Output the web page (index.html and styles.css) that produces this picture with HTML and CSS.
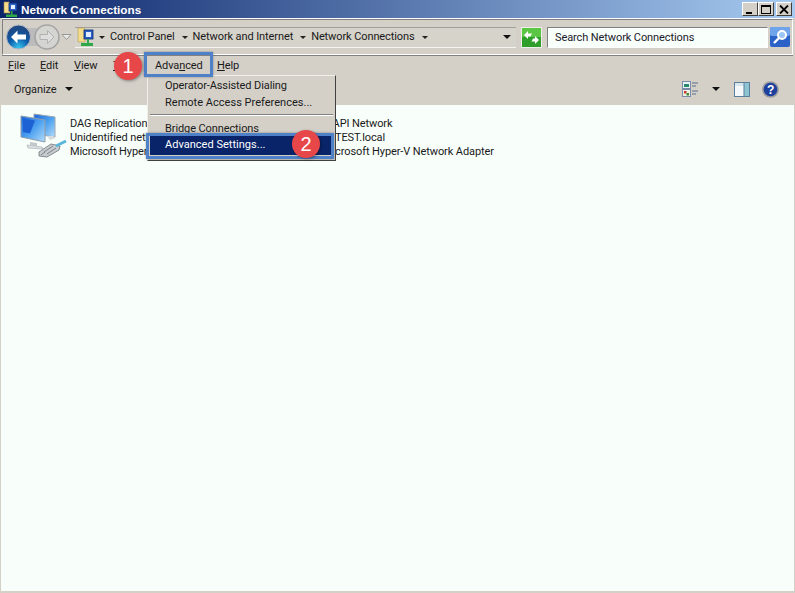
FILE: index.html
```html
<!DOCTYPE html>
<html lang="en">
<head>
<meta charset="utf-8">
<title>Network Connections</title>
<link rel="stylesheet" href="styles.css">
</head>
<body>
<svg class="defs" width="0" height="0">
  <defs>
    <radialGradient id="bk" cx=".5" cy=".95" r=".8"><stop offset="0" stop-color="#35c8f4"/><stop offset=".55" stop-color="#0c5aa8"/><stop offset="1" stop-color="#1f4a86"/></radialGradient>
    <linearGradient id="scr" x1="0" y1="0" x2="1" y2="1"><stop offset="0" stop-color="#1f66d8"/><stop offset=".5" stop-color="#4aa0f0"/><stop offset="1" stop-color="#b4dcfa"/></linearGradient>
    <symbol id="net" viewBox="0 0 50 50">
      <path d="M16 4l21 3v20l-21-3z" fill="url(#scr)" stroke="#9aa6b4"/>
      <path d="M29 26h6l3 2-6 2z" fill="#d8dbde"/>
      <path d="M3 6l24 4v22L3 27z" fill="url(#scr)" stroke="#8f9caa"/>
      <path d="M5 8.500l12 2-5 13-7-1.500z" fill="#1c62d4"/>
      <path d="M12 32l7 1v3l-7-1z" fill="#c4c8cc"/>
      <path d="M9 35l15 2 1 2-15-1z" fill="#e0e2e4" stroke="#a0a6ac" stroke-width=".6"/>
      <path d="M21 42l12-8 9 2-1 4-12 7-8-1z" fill="#c8ccd0" stroke="#6c7278" stroke-width=".8"/>
      <path d="M26 42l9-6M29 44l9-6M23 45l4-3" stroke="#5c6268" stroke-width=".7"/>
      <path d="M38 36l10-5" stroke="#5ab6da" stroke-width="3"/>
    </symbol>
  </defs>
</svg>
<div class="window">
  <header class="titlebar">
    <svg class="title-icon" width="16" height="17" viewBox="0 0 16 17"><path d="M1 1h5l1 1v10H1z" fill="#f4dc8a" stroke="#a08a40" stroke-width=".6"/><rect x="6" y="2" width="8" height="8" fill="#2a5fc4" stroke="#0c2a70" stroke-width=".8"/><rect x="8" y="4" width="4" height="4" fill="#e8f0ff"/><rect x="3" y="13.500" width="11" height="2.500" fill="#2fa84a"/><rect x="8" y="10" width="1.500" height="4" fill="#2fa84a"/></svg>
    <span class="title-text">Network Connections</span>
    <div class="caption-buttons">
      <button class="cap"><span class="cap-min"></span></button>
      <button class="cap"><span class="cap-max"></span></button>
      <button class="cap cap-close"><svg width="10" height="9" viewBox="0 0 10 9"><path d="M1 .5l8 8M9 .5l-8 8" stroke="#000" stroke-width="1.800"/></svg></button>
    </div>
  </header>

  <div class="addressbar">
    <div class="nav">
      <svg width="70" height="28" viewBox="0 0 70 28"><rect x="11" y="5" width="36" height="18" fill="#bcbcbc"/><circle cx="13.500" cy="14" r="12" fill="url(#bk)" stroke="#b4b8c4"/><path d="M6 14l6.500-6.500v4H21v5h-8.500v4z" fill="#fff"/><circle cx="42" cy="14" r="12" fill="#d4d4d0" stroke="#a4a4a4" stroke-width="1.600"/><path d="M49 14l-6.500-6.500v4H35v5h7.500v4z" fill="#dedede" stroke="#a8a8a8" stroke-width=".8"/><path d="M57 11.500h9l-4.500 5z" fill="#e8e8e8" stroke="#888" stroke-width=".8"/></svg>
    </div>
    <div class="address-field">
      <svg class="addr-icon" width="17" height="20" viewBox="0 0 17 20"><path d="M1 1h6l1 1v13H1z" fill="#f4dc8a" stroke="#b09a50" stroke-width=".6"/><rect x="7" y="3" width="9" height="9" fill="#2a5fc4" stroke="#0c2a70" stroke-width=".8"/><rect x="9" y="5" width="5" height="5" fill="#dfe9ff"/><rect x="4" y="16" width="12" height="3" fill="#2fa84a"/><rect x="10" y="12" width="2" height="4" fill="#2fa84a"/></svg>
      <span class="crumb-arrow"></span><span class="crumb">Control Panel</span>
      <span class="crumb-arrow"></span><span class="crumb">Network and Internet</span>
      <span class="crumb-arrow"></span><span class="crumb">Network Connections</span>
      <span class="crumb-arrow"></span>
      <span class="address-drop"></span>
    </div>
    <button class="refresh"><svg width="19" height="19" viewBox="0 0 19 19"><rect width="19" height="19" fill="#2f9e2a"/><rect width="19" height="9" fill="#5ac644"/><path d="M2 7l4-4v2.500h4l-1.500 3H6V11zM17 12l-4 4v-2.500H9.500l1.500-3h2V8z" fill="#fff"/></svg></button>
    <div class="search-field">Search Network Connections</div>
    <button class="search-btn"><svg width="20" height="20" viewBox="0 0 20 20"><rect width="20" height="20" rx="2" fill="#2a62c8"/><rect width="20" height="9" rx="2" fill="#6fa4ea"/><circle cx="12" cy="8" r="4" fill="#9cc4f4" stroke="#fff" stroke-width="2"/><path d="M9 11l-5 5" stroke="#fff" stroke-width="2.400"/></svg></button>
  </div>

  <nav class="menubar">
    <span class="menu-item m-file"><u>F</u>ile</span>
    <span class="menu-item m-edit"><u>E</u>dit</span>
    <span class="menu-item m-view"><u>V</u>iew</span>
    <span class="menu-item m-tools"><u>T</u>ools</span>
    <span class="menu-item m-advanced">Adva<u>n</u>ced</span>
    <span class="menu-item"><u>H</u>elp</span>
  </nav>

  <div class="toolbar">
    <span class="organize">Organize</span>
    <span class="tb-arrow"></span>
    <div class="tb-right">
      <svg class="tb-views" width="18" height="17" viewBox="0 0 18 17"><rect x=".5" y=".5" width="8" height="7" fill="#e8f4f4" stroke="#7a8aa8"/><rect x="2" y="3" width="5" height="3" fill="#2a8a70"/><rect x=".5" y="8.500" width="8" height="7" fill="#f0f0e0" stroke="#7a8aa8"/><rect x="2" y="10" width="2.500" height="2.500" fill="#c83a30"/><rect x="4.500" y="12" width="2.500" height="2.500" fill="#3a8a40"/><path d="M10 2h6M10 5h4M10 10h6M10 13h4" stroke="#56708c" stroke-width="1.200"/></svg>
      <span class="tb-arrow tb-arrow-views"></span>
      <svg class="tb-pane" width="16" height="15" viewBox="0 0 16 15"><rect x=".5" y=".5" width="15" height="14" fill="#f4f8fa" stroke="#5c7f9c"/><rect x="1" y="1" width="14" height="3" fill="#d8e6ee"/><rect x="10" y="1" width="5" height="13" fill="#8cc4d4"/><path d="M10 1v13" stroke="#5c7f9c"/></svg>
      <svg class="tb-help" width="17" height="17" viewBox="0 0 17 17"><circle cx="8.500" cy="8.500" r="7.600" fill="#1d3f9e" stroke="#9a9a9e" stroke-width="1.500"/><text x="8.500" y="13" text-anchor="middle" class="help-mark">?</text></svg>
    </div>
  </div>

  <main class="content">
    <div class="connection">
      <svg class="conn-icon" width="50" height="50"><use href="#net"/></svg>
      <div class="conn-text">
        <span>DAG Replication</span>
        <span>Unidentified network</span>
        <span>Microsoft Hyper-V Network Adapter</span>
      </div>
    </div>
    <div class="connection">
      <svg class="conn-icon" width="50" height="50"><use href="#net"/></svg>
      <div class="conn-text">
        <span>MAPI Network</span>
        <span class="conn-indent">TEST.local</span>
        <span>Microsoft Hyper-V Network Adapter</span>
      </div>
    </div>
  </main>
</div>

<div class="dropdown">
  <div class="drop-item">Operator-Assisted Dialing</div>
  <div class="drop-item drop-dots">Remote Access Preferences...</div>
  <div class="drop-sep"></div>
  <div class="drop-item drop-bridge">Bridge Connections</div>
  <div class="drop-item drop-active drop-dots">Advanced Settings...</div>
</div>

<div class="callout callout-menu"></div>
<div class="callout callout-item"></div>
<div class="badge badge-one">1</div>
<div class="badge badge-two">2</div>
</body>
</html>
```
FILE: styles.css
```css
* { box-sizing: border-box; }
html, body { margin: 0; height: 100%; }
body {
  width: 795px;
  height: 593px;
  overflow: hidden;
  background: #d4d0c8;
  font-family: Roboto, sans-serif;
  font-size: 11px;
  letter-spacing: -.1px;
  color: #1a1a1a;
  position: relative;
}
button { padding: 0; border: 0; background: none; display: block; }
svg { display: block; flex: none; }
.defs { position: absolute; }

.window { height: 593px; display: flex; flex-direction: column; }

.titlebar {
  height: 18px;
  flex: none;
  display: flex;
  align-items: center;
  padding: 0 3px 0 3px;
  background: linear-gradient(to right, #0a246a, #a6caf0);
  color: #fff;
}
.title-icon { margin-right: 2px; }
.title-text { font-family: "Liberation Sans", sans-serif; font-weight: 700; font-size: 11.7px; letter-spacing: 0; }
.caption-buttons { margin-left: auto; display: flex; }
.cap {
  width: 16px;
  height: 14px;
  background: #d4d0c8;
  border: 1px solid;
  border-color: #fff #404040 #404040 #fff;
  display: flex;
  align-items: center;
  justify-content: center;
}
.cap-close { margin-left: 2px; }
.cap-min { width: 6px; height: 2px; background: #000; margin-top: 7px; margin-right: 3px; }
.cap-max { width: 10px; height: 9px; border: 1px solid #000; border-top-width: 2px; }

.addressbar {
  height: 36px;
  flex: none;
  margin: 1px 2px 0 2px;
  border: 1px solid;
  border-color: #808080 #fff #fff #808080;
  box-shadow: 0 -1px 0 #fff, 0 1px 0 #808080;
  display: flex;
  align-items: center;
  padding: 0 2px 0 2px;
}
.nav { width: 70px; height: 28px; flex: none; }
.address-field {
  width: 441px;
  height: 21px;
  background: #d6d3cb;
  border-top: 1px solid #a0a09a;
  border-bottom: 1px solid #f4f4f0;
  display: flex;
  align-items: center;
}
.addr-icon { margin: 0 5px 0 2px; }
.crumb { margin: 0 7px 2px 5px; white-space: nowrap; }
.crumb-arrow {
  width: 0;
  height: 0;
  border: 3px solid transparent;
  border-top: 3px solid #222;
  border-bottom: 0;
  flex: none;
}
.address-drop {
  width: 0;
  height: 0;
  border: 4px solid transparent;
  border-top: 4px solid #111;
  border-bottom: 0;
  margin-left: auto;
  margin-right: 5px;
}
.refresh { margin-left: 5px; border: 1px solid #f0f0ea; }
.search-field {
  width: 221px;
  height: 21px;
  margin-left: 5px;
  background: #f9fffa;
  border: 1px solid;
  border-color: #808080 #fff #fff #808080;
  padding-left: 7px;
  line-height: 20px;
  color: #1a1a2a;
}
.search-btn { margin-left: 2px; }

.menubar {
  height: 20px;
  flex: none;
  display: flex;
  align-items: center;
  padding-left: 8px;
}
.menu-item { white-space: nowrap; }
.m-file { width: 32px; }
.m-edit { width: 34px; }
.m-view { width: 39px; }
.m-tools { width: 42px; }
.m-advanced { width: 62px; }

.toolbar {
  height: 30px;
  flex: none;
  display: flex;
  align-items: center;
  padding: 0 16px 2px 14px;
}
.organize { margin-right: 8px; }
.tb-arrow {
  width: 0;
  height: 0;
  border: 4px solid transparent;
  border-top: 4px solid #111;
  border-bottom: 0;
  flex: none;
}
.tb-right { margin-left: auto; display: flex; align-items: center; }
.tb-arrow-views { margin: 0 14px 0 12px; }
.tb-help { margin-left: 12px; }
.help-mark { font-family: "Liberation Sans", sans-serif; font-weight: 700; font-size: 12px; fill: #fff; }

.content {
  flex: 1;
  margin: 0 1px 2px 1px;
  background: #f8fffa;
  padding: 5px 0 0 17px;
  display: grid;
  grid-template-columns: 253px 260px;
  align-content: start;
}
.connection { display: flex; gap: 2px; }
.conn-text { display: flex; flex-direction: column; padding-top: 7px; line-height: 14px; white-space: nowrap; }
.conn-indent { padding-left: 12px; }

.dropdown {
  position: absolute;
  left: 147px;
  top: 75px;
  width: 189px;
  height: 86px;
  background: #d4d0c8;
  border: 1px solid;
  border-color: #f0eee8 #404040 #404040 #f0eee8;
  padding: 1px 0 0 2px;
}
.drop-item { height: 17px; line-height: 17px; padding-left: 15px; white-space: nowrap; }
.drop-dots { letter-spacing: .02px; }
.drop-sep { height: 2px; margin: 3px 2px 4px 0; background: #808080; border-bottom: 1px solid #fff; }
.drop-bridge { height: 16px; }
.drop-active { background: #0a246a; color: #fff; height: 19px; margin-right: 2px; line-height: 17px; }

.callout { position: absolute; border: 3px solid #4f81c8; box-shadow: 0 0 2px rgba(60, 60, 60, .5); }
.callout-menu { left: 144px; top: 52px; width: 69px; height: 25px; }
.callout-item { left: 146px; top: 133px; width: 188px; height: 26px; }

.badge {
  position: absolute;
  width: 28px;
  height: 28px;
  border-radius: 50%;
  background: #e8474a;
  color: #fff;
  font-family: "Liberation Sans", sans-serif;
  font-size: 20px;
  line-height: 28px;
  text-align: center;
  box-shadow: 1px 1px 3px rgba(0, 0, 0, .4);
}
.badge-one { left: 114px; top: 52px; }
.badge-two { left: 292px; top: 130px; }
```
